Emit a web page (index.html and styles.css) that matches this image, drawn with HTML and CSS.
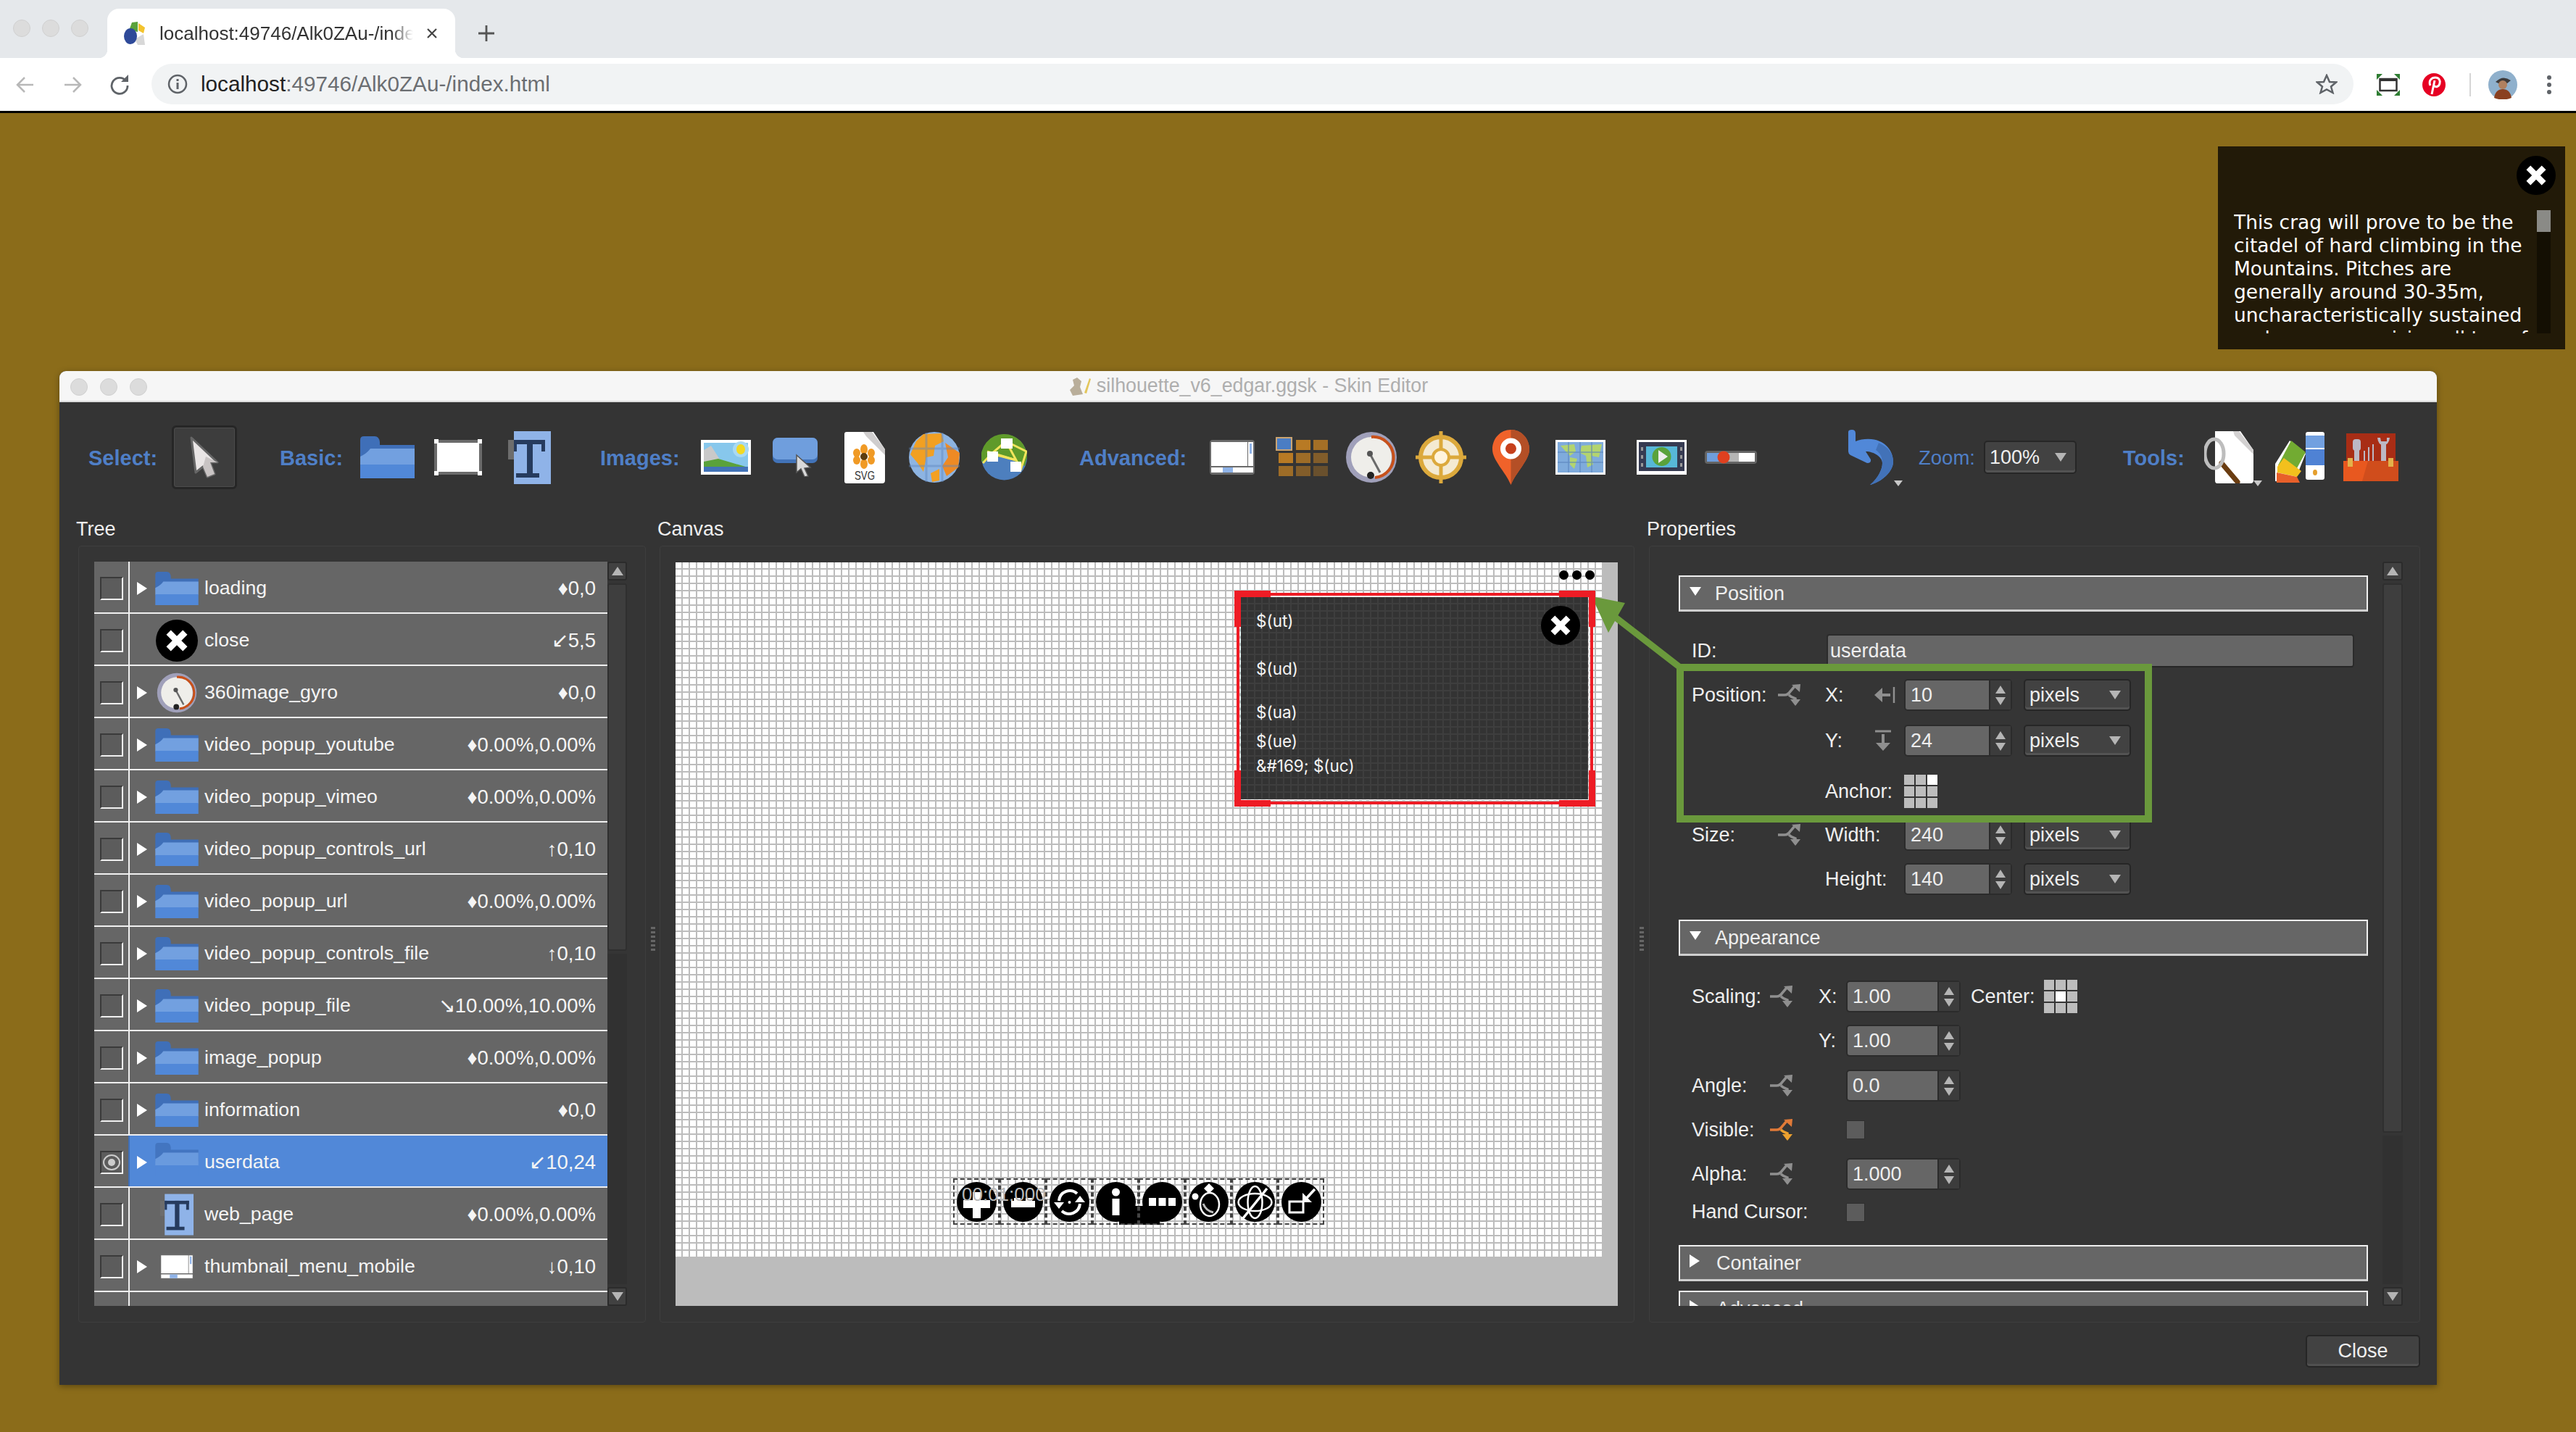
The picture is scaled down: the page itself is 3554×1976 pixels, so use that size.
FILE: index.html
```html
<!DOCTYPE html>
<html lang="en">
<head>
<meta charset="utf-8">
<title>Skin Editor</title>
<link rel="stylesheet" href="styles.css">
</head>
<body>
<svg class="sprite" width="0" height="0" aria-hidden="true">
  <defs>
    <symbol id="folder" viewBox="0 0 75 58"><path d="M0 5Q0 0 5 0H20Q26 0 27 8V12H75V32H0Z" fill="#3f6fb8"/><path d="M0 28Q9 24 14 17H75V40H0Z" fill="#72a0e0"/><path d="M0 39H75V58H0Z" fill="#5188d8"/></symbol>
    <symbol id="close" viewBox="0 0 56 56"><circle cx="28" cy="28" r="28" fill="#000"/><path d="M14 20l6-6 8 8 8-8 6 6-8 8 8 8-6 6-8-8-8 8-6-6 8-8z" fill="#fff"/></symbol>
    <symbol id="rectframe" viewBox="0 0 66 50"><rect x="2" y="3" width="62" height="44" fill="#fff" stroke="#6b6b6b" stroke-width="4"/><g fill="#fff"><rect x="0" y="0" width="6" height="6"/><rect x="60" y="0" width="6" height="6"/><rect x="0" y="44" width="6" height="6"/><rect x="60" y="44" width="6" height="6"/></g></symbol>
    <symbol id="textbox" viewBox="0 0 59 73"><rect x="0" y="12" width="9" height="27" fill="#6d6d6d"/><rect x="8" y="0" width="51" height="73" fill="#8fb3e8"/><g fill="#263b5e"><rect x="8" y="12" width="43" height="6"/><rect x="26" y="12" width="8" height="50"/><rect x="11" y="58" width="32" height="6"/><rect x="46" y="12" width="5" height="16"/><rect x="8" y="12" width="4" height="16"/></g></symbol>
    <symbol id="image" viewBox="0 0 69 48"><rect width="69" height="48" fill="#fff"/><rect x="4" y="4" width="61" height="40" fill="#87c7ec"/><circle cx="55" cy="13" r="11" fill="#a9d9f2"/><ellipse cx="55" cy="13" rx="6" ry="7" fill="#f3d923"/><path d="M4 14L14 8 28 30 4 40z" fill="#c9c9c9"/><path d="M4 30L24 26 65 38V44H4z" fill="#5aa23b"/><rect x="4" y="37" width="61" height="7" fill="#4273b8"/></symbol>
    <symbol id="btnicon" viewBox="0 0 63 54"><rect width="62" height="35" rx="7" fill="#4273b8"/><rect width="62" height="30" rx="7" fill="#6f9edd"/><path d="M33 24L52 41 44 42 49 53 44 54 39 43 33 48z" fill="#d9d9d9" stroke="#555" stroke-width="1.5"/></symbol>
    <symbol id="svgdoc" viewBox="0 0 56 71"><path d="M3 0H40L56 24V67Q56 71 52 71H3Q0 71 0 68V3Q0 0 3 0Z" fill="#fff"/><path d="M38 0L56 24 56 32 30 6 26 0Z" fill="#cfcdcd"/><g fill="#f09a25"><ellipse cx="27" cy="24" rx="5" ry="7"/><ellipse cx="27" cy="44" rx="5" ry="7"/><ellipse cx="17" cy="29" rx="5" ry="6"/><ellipse cx="37" cy="29" rx="5" ry="6"/><ellipse cx="17" cy="39" rx="5" ry="6"/><ellipse cx="37" cy="39" rx="5" ry="6"/></g><circle cx="27" cy="34" r="5" fill="#5a3c10"/><text x="28" y="66" text-anchor="middle" font-family="Liberation Sans" font-size="17" fill="#333" textLength="28" lengthAdjust="spacingAndGlyphs">SVG</text></symbol>
    <symbol id="globe" viewBox="0 0 70 72"><circle cx="35" cy="36" r="35" fill="#8db4e2"/><path d="M20 4L45 3 48 14 36 20 34 34 24 36 20 56 12 44 2 32 10 14z" fill="#f2a022"/><path d="M50 16L70 30 68 50 52 62 46 48 54 36z" fill="#ee8a24"/><path d="M30 58L42 52 42 68 32 70z" fill="#f2a022"/><g stroke="#5e86bf" stroke-width="3" fill="none" opacity=".45"><path d="M0 24H70M0 48H70"/><path d="M24 2V70M46 2V70"/></g></symbol>
    <symbol id="network" viewBox="0 0 63 64"><circle cx="31.500" cy="32" r="31.500" fill="#4d7fbe"/><path d="M31.500 0A31.500 32 0 0 1 63 32L60 44 30 30 0 38A31.500 32 0 0 1 31.500 0Z" fill="#5f9a2a"/><g stroke="#f2e55b" stroke-width="3" fill="none"><path d="M34 10L14 27 2 40"/><path d="M34 10L48 36 8 24"/><path d="M34 10L62 24 54 50"/><path d="M14 27L48 36"/></g><g fill="#fff"><rect x="27" y="6" width="16" height="14"/><rect x="8" y="24" width="15" height="14"/><rect x="40" y="38" width="15" height="14"/></g></symbol>
    <symbol id="thumbs" viewBox="0 0 62 48"><rect width="62" height="48" rx="4" fill="#6a6a6a"/><rect x="2" y="3" width="50" height="33" fill="#fff"/><rect x="53" y="3" width="7" height="33" fill="#fff"/><rect x="55" y="5" width="3" height="14" fill="#8fb3e8"/><rect x="2" y="38" width="58" height="7" fill="#fff"/><rect x="18" y="38" width="14" height="7" fill="#8fb3e8"/></symbol>
    <symbol id="gridicon" viewBox="0 0 72 56"><rect x="1" y="1" width="21" height="17" fill="#4a7dc4" stroke="#caa472" stroke-width="2"/><g fill="#b87a24"><rect x="28" y="4" width="20" height="14"/><rect x="52" y="4" width="20" height="14" opacity=".85"/><rect x="4" y="22" width="20" height="14"/><rect x="28" y="22" width="20" height="14" opacity=".8"/><rect x="52" y="22" width="20" height="14" opacity=".6"/><rect x="4" y="40" width="20" height="14" opacity=".8"/><rect x="28" y="40" width="20" height="14" opacity=".6"/><rect x="52" y="40" width="20" height="14" opacity=".4"/></g></symbol>
    <symbol id="gauge" viewBox="0 0 70 72"><circle cx="35" cy="36" r="35" fill="#a0a0ba"/><circle cx="35" cy="36" r="28" fill="#efeeea"/><path d="M35 8A28 28 0 0 1 40 64" fill="none" stroke="#c8511b" stroke-width="4"/><path d="M34 33L47 57" stroke="#6a6a6a" stroke-width="3"/><circle cx="33" cy="31" r="4" fill="#555"/><circle cx="34" cy="61" r="5" fill="#222"/></symbol>
    <symbol id="target" viewBox="0 0 70 72"><circle cx="35" cy="36" r="28" fill="#f4ead2" stroke="#dca93c" stroke-width="6"/><path d="M35 0V72M0 36H70" stroke="#dca93c" stroke-width="5"/><circle cx="35" cy="36" r="11" fill="#fff4dc" stroke="#dca93c" stroke-width="4"/></symbol>
    <symbol id="pin" viewBox="0 0 51 76"><path d="M25.500 0C11 0 0 12 0 27C0 42 18 58 25.500 76C33 58 51 42 51 27C51 12 40 0 25.500 0Z" fill="#f0622a"/><path d="M25.500 0C40 0 51 12 51 27C51 42 33 58 25.500 76Z" fill="#b44f26"/><circle cx="25.500" cy="26" r="11" fill="#c6401c" stroke="#fff" stroke-width="7"/></symbol>
    <symbol id="mapicon" viewBox="0 0 69 48"><rect width="69" height="48" fill="#fff"/><rect x="3" y="3" width="63" height="42" fill="#7fabdc"/><path d="M7 8L26 6 28 16 20 22 16 18zM20 24L30 26 26 40 20 34zM36 8L64 6 60 24 50 22 52 34 44 38 42 22 34 18z" fill="#b3d46f"/><path d="M3 17H66M3 31H66M18 3V45M34 3V45M50 3V45" stroke="#5a84bc" stroke-width="1.500" opacity=".7"/></symbol>
    <symbol id="video" viewBox="0 0 69 48"><rect width="69" height="48" fill="#fff"/><rect x="3" y="3" width="63" height="40" fill="#363b52"/><rect x="13" y="9" width="43" height="29" fill="#57b7d8"/><circle cx="34.500" cy="23" r="13" fill="#5aa23b"/><path d="M30 14L43 23 30 32z" fill="#eee"/><g fill="#999"><rect x="6" y="10" width="3" height="5"/><rect x="6" y="21" width="3" height="5"/><rect x="6" y="32" width="3" height="5"/><rect x="60" y="10" width="3" height="5"/><rect x="60" y="21" width="3" height="5"/><rect x="60" y="32" width="3" height="5"/></g></symbol>
    <symbol id="slider" viewBox="0 0 72 18"><rect width="72" height="18" rx="4" fill="#646464"/><rect x="3" y="3" width="20" height="12" fill="#6f9edd"/><rect x="23" y="3" width="24" height="12" fill="#b5b5b5"/><rect x="47" y="3" width="22" height="12" fill="#fff"/><circle cx="26" cy="9" r="8.500" fill="#e0401f"/></symbol>
    <symbol id="undo" viewBox="0 0 64 76"><path d="M2 3Q2 0 7 0Q12 0 12 5V16Q22 12 34 13C54 15 64 30 64 44C64 58 48 72 32 76C44 66 49 54 49 46C49 38 38 30 26 30L33 41Q34 46 28 46L5 35Q2 33 2 30Z" fill="#5188d8"/><path d="M44 18C58 24 64 34 64 44C64 58 48 72 32 76C44 66 49 54 49 46C49 38 46 32 40 28Z" fill="#4272b8"/></symbol>
    <symbol id="docfind" viewBox="0 0 68 72"><path d="M15 0H50L68 26V68Q68 72 64 72H18Q15 72 15 68Z" fill="#fff"/><path d="M48 0L68 26V32L42 6 40 0Z" fill="#d3d1d1"/><path d="M24 44L46 70" stroke="#6a3d12" stroke-width="7" stroke-linecap="round"/><ellipse cx="14" cy="31" rx="13" ry="20" fill="none" stroke="#bdbdbd" stroke-width="5"/></symbol>
    <symbol id="paint" viewBox="0 0 68 70"><path d="M0 68V44L20 12 42 30 26 70z" fill="#fff"/><path d="M4 46L22 12 42 28 30 50z" fill="#72ab32"/><path d="M3 48L12 36 36 54 30 62 3 56z" fill="#f3c01d"/><path d="M2 56L30 62 34 70H2z" fill="#e8602a"/><rect x="42" y="0" width="26" height="66" rx="3" fill="#fff"/><rect x="42" y="5" width="26" height="17" fill="#72a0e0"/><rect x="42" y="24" width="26" height="22" fill="#4f82d4"/><ellipse cx="55" cy="56" rx="3" ry="4" fill="#e59f2d"/></symbol>
    <symbol id="toolbox" viewBox="0 0 76 66"><rect x="4" y="0" width="68" height="38" fill="#a82d15"/><rect x="0" y="38" width="76" height="28" fill="#e8581f"/><path d="M34 38H76V66H26z" fill="#d04d1c"/><g fill="#bcb8c4"><rect x="15" y="12" width="7" height="26"/><rect x="13" y="8" width="11" height="16" rx="4"/><path d="M52 12h7v26h-7z"/><path d="M47 6Q48 16 55 16Q63 16 64 6L60 6 60 11 52 11 51 6Z"/><rect x="28" y="24" width="2" height="14"/><rect x="34" y="19" width="2" height="19"/><rect x="40" y="15" width="2" height="23"/></g><rect x="6" y="34" width="7" height="12" fill="#e3b14a"/><rect x="62" y="34" width="7" height="12" fill="#e3b14a"/></symbol>
    <symbol id="cursor" viewBox="0 0 40 58"><path d="M2 2L38 36 28 36 34 52 24 56 18 42 8 50z" fill="#e9e5e5" stroke="#666" stroke-width="3" stroke-linejoin="round"/><path d="M38 36L28 36 34 52 24 56 18 42 22 28z" fill="#c9c4c4"/></symbol>
    <symbol id="link" viewBox="0 0 32 30"><g fill="none" stroke="currentColor" stroke-width="3.500"><path d="M0 15H9Q14 15 17 10L23 3"/><path d="M15 15Q18 18 24 20V28"/></g><path d="M19 1L31 0 30 11z" fill="currentColor"/><path d="M17 21H31L24 30z" fill="currentColor"/></symbol>
    <symbol id="linkwarm" viewBox="0 0 32 30"><g fill="none" stroke-width="3.500"><path d="M0 15H9Q14 15 17 10L23 3" stroke="#e07a38"/><path d="M15 15Q18 18 24 20V28" stroke="#eba12f"/></g><path d="M19 1L31 0 30 11z" fill="#e07a38"/><path d="M17 21H31L24 30z" fill="#eba12f"/></symbol>
    <symbol id="back" viewBox="0 0 28 28"><path d="M25 14H4M13 4L3 14 13 24" fill="none" stroke="currentColor" stroke-width="2.500"/></symbol>
    <symbol id="fwd" viewBox="0 0 28 28"><path d="M3 14H24M15 4L25 14 15 24" fill="none" stroke="currentColor" stroke-width="2.500"/></symbol>
  </defs>
</svg>

<header class="chrome">
  <div class="tabstrip">
    <div class="lights lights-chrome"><i></i><i></i><i></i></div>
    <div class="tab">
      <svg class="favicon" width="35" height="32" viewBox="0 0 35 32"><path d="M8 12L12 1 20 0 20 14z" fill="#5aa23b"/><path d="M21 2L30 8 28 16 21 12z" fill="#f3c32d"/><path d="M16 24L28 17 30 32 20 32z" fill="#d8d8d8"/><ellipse cx="10" cy="20" rx="9" ry="11" fill="#2e4a99"/></svg>
      <span class="tab-title">localhost:49746/Alk0ZAu-/index.html</span>
      <svg class="tab-x" width="16" height="16" viewBox="0 0 16 16"><path d="M2 2L14 14M14 2L2 14" stroke="#444" stroke-width="2.200"/></svg>
    </div>
    <svg class="newtab" width="24" height="24" viewBox="0 0 24 24"><path d="M12 1V23M1 12H23" stroke="#555" stroke-width="2.800"/></svg>
  </div>
  <div class="navbar">
    <svg class="nav-ico nav-off" width="28" height="28"><use href="#back"/></svg>
    <svg class="nav-ico nav-off" width="28" height="28"><use href="#fwd"/></svg>
    <svg class="nav-ico nav-on" width="28" height="28" viewBox="0 0 28 28"><path d="M23 9A11 11 0 1 0 25 15" fill="none" stroke="currentColor" stroke-width="2.800"/><path d="M16 10H26V0z" fill="currentColor"/></svg>
    <div class="omnibox">
      <svg class="info" width="28" height="28" viewBox="0 0 28 28"><circle cx="14" cy="14" r="12" fill="none" stroke="#5f6368" stroke-width="2.500"/><rect x="12.500" y="12" width="3" height="9" fill="#5f6368"/><rect x="12.500" y="7" width="3" height="3" fill="#5f6368"/></svg>
      <span class="url"><b>localhost</b>:49746/Alk0ZAu-/index.html</span>
      <svg class="star" width="30" height="28" viewBox="0 0 30 28"><path d="M15 2L19 11 28 11.500 21 17.500 23.500 26 15 21.500 6.500 26 9 17.500 2 11.500 11 11z" fill="none" stroke="#5f6368" stroke-width="2.500"/></svg>
    </div>
    <div class="nav-actions">
      <svg width="32" height="30" viewBox="0 0 32 30"><path d="M0 0H8L0 8zM32 0H24L32 8zM0 30H8L0 22zM32 30H24L32 22z" fill="#2e7d32"/><rect x="4.500" y="7" width="23" height="16" fill="none" stroke="#333" stroke-width="2.500"/><rect x="4" y="6" width="24" height="4" fill="#333"/></svg>
      <svg width="32" height="32" viewBox="0 0 32 32"><circle cx="16" cy="16" r="16" fill="#e60023"/><path d="M11 17C8 10 13 6 18 6C23 6 25 10 24 14C23 19 18 20 16 17M17 10L13 29" fill="none" stroke="#fff" stroke-width="3"/></svg>
      <span class="nav-sep"></span>
      <svg width="40" height="40" viewBox="0 0 40 40"><circle cx="20" cy="20" r="20" fill="#8fb0cc"/><path d="M10 16Q20 6 31 14L26 18H14z" fill="#3d3a3a"/><ellipse cx="20" cy="20" rx="6" ry="6" fill="#b0805f"/><path d="M8 38Q10 26 20 26Q30 26 32 38Q20 43 8 38Z" fill="#8a4020"/></svg>
      <svg width="8" height="28" viewBox="0 0 8 28"><circle cx="4" cy="4" r="3" fill="#5f6368"/><circle cx="4" cy="14" r="3" fill="#5f6368"/><circle cx="4" cy="24" r="3" fill="#5f6368"/></svg>
    </div>
  </div>
</header>

<main class="desktop">
  <aside class="popup">
    <svg class="popup-close" width="54" height="54"><use href="#close"/></svg>
    <div class="popup-text">This crag will prove to be the citadel of hard climbing in the Mountains. Pitches are generally around 30-35m, uncharacteristically sustained and uncompromising all top of</div>
    <div class="popup-track"><div class="popup-thumb"></div></div>
  </aside>

  <section class="window">
    <div class="titlebar">
      <div class="lights lights-win"><i></i><i></i><i></i></div>
      <svg width="31" height="26" viewBox="0 0 31 26"><path d="M6 4L12 1 18 6 16 14 20 24 6 26 2 18 8 12z" fill="#b9ae9a"/><path d="M22 22L29 2 31 3 25 23z" fill="#e3c65b"/></svg>
      <span>silhouette_v6_edgar.ggsk - Skin Editor</span>
    </div>

    <div class="toolbar">
      <div class="tgroup">
        <span class="tlabel w-select">Select:</span>
        <span class="selectbtn"><svg width="40" height="58"><use href="#cursor"/></svg></span>
      </div>
      <div class="tgroup">
        <span class="tlabel w-basic">Basic:</span>
        <span class="tool wide"><svg width="75" height="58"><use href="#folder"/></svg></span>
        <span class="tool wide"><svg width="66" height="50"><use href="#rectframe"/></svg></span>
        <span class="tool wide"><svg width="59" height="73"><use href="#textbox"/></svg></span>
      </div>
      <div class="tgroup">
        <span class="tlabel w-images">Images:</span>
        <span class="tool"><svg width="69" height="48"><use href="#image"/></svg></span>
        <span class="tool"><svg width="63" height="54"><use href="#btnicon"/></svg></span>
        <span class="tool"><svg width="56" height="71"><use href="#svgdoc"/></svg></span>
        <span class="tool"><svg width="70" height="72"><use href="#globe"/></svg></span>
        <span class="tool"><svg width="63" height="64"><use href="#network"/></svg></span>
      </div>
      <div class="tgroup">
        <span class="tlabel w-advanced">Advanced:</span>
        <span class="tool"><svg width="62" height="48"><use href="#thumbs"/></svg></span>
        <span class="tool"><svg width="72" height="56"><use href="#gridicon"/></svg></span>
        <span class="tool"><svg width="70" height="72"><use href="#gauge"/></svg></span>
        <span class="tool"><svg width="70" height="72"><use href="#target"/></svg></span>
        <span class="tool"><svg width="51" height="76"><use href="#pin"/></svg></span>
        <span class="tool"><svg width="69" height="48"><use href="#mapicon"/></svg></span>
        <span class="tool tool-sep"><svg width="69" height="48"><use href="#video"/></svg></span>
        <span class="tool"><svg width="72" height="18"><use href="#slider"/></svg></span>
      </div>
      <div class="tgroup">
        <span class="tool tool-menu"><svg width="64" height="76"><use href="#undo"/></svg></span>
        <span class="zoomlabel">Zoom:</span>
        <span class="combo combo-zoom">100%<i class="tri-down"></i></span>
      </div>
      <div class="tgroup">
        <span class="tlabel w-tools">Tools:</span>
        <span class="tool wide tool-menu"><svg width="68" height="72"><use href="#docfind"/></svg></span>
        <span class="tool wide"><svg width="68" height="70"><use href="#paint"/></svg></span>
        <span class="tool wide"><svg width="76" height="66"><use href="#toolbox"/></svg></span>
      </div>
    </div>

    <div class="panels">
      <div class="panel">
        <h2 class="panel-title">Tree</h2>
        <div class="groupbox box-tree">
          <div class="treelist">
            <div class="row"><span class="chk"><i></i></span><i class="tri-right"></i><span class="ico"><svg width="60" height="46"><use href="#folder"/></svg></span><span class="name">loading</span><span class="val">♦0,0</span></div>
            <div class="row"><span class="chk"><i></i></span><span class="noarrow"></span><span class="ico"><svg width="58" height="58"><use href="#close"/></svg></span><span class="name">close</span><span class="val">↙5,5</span></div>
            <div class="row"><span class="chk"><i></i></span><i class="tri-right"></i><span class="ico"><svg width="56" height="56"><use href="#gauge"/></svg></span><span class="name">360image_gyro</span><span class="val">♦0,0</span></div>
            <div class="row"><span class="chk"><i></i></span><i class="tri-right"></i><span class="ico"><svg width="60" height="46"><use href="#folder"/></svg></span><span class="name">video_popup_youtube</span><span class="val">♦0.00%,0.00%</span></div>
            <div class="row"><span class="chk"><i></i></span><i class="tri-right"></i><span class="ico"><svg width="60" height="46"><use href="#folder"/></svg></span><span class="name">video_popup_vimeo</span><span class="val">♦0.00%,0.00%</span></div>
            <div class="row"><span class="chk"><i></i></span><i class="tri-right"></i><span class="ico"><svg width="60" height="46"><use href="#folder"/></svg></span><span class="name">video_popup_controls_url</span><span class="val">↑0,10</span></div>
            <div class="row"><span class="chk"><i></i></span><i class="tri-right"></i><span class="ico"><svg width="60" height="46"><use href="#folder"/></svg></span><span class="name">video_popup_url</span><span class="val">♦0.00%,0.00%</span></div>
            <div class="row"><span class="chk"><i></i></span><i class="tri-right"></i><span class="ico"><svg width="60" height="46"><use href="#folder"/></svg></span><span class="name">video_popup_controls_file</span><span class="val">↑0,10</span></div>
            <div class="row"><span class="chk"><i></i></span><i class="tri-right"></i><span class="ico"><svg width="60" height="46"><use href="#folder"/></svg></span><span class="name">video_popup_file</span><span class="val">↘10.00%,10.00%</span></div>
            <div class="row"><span class="chk"><i></i></span><i class="tri-right"></i><span class="ico"><svg width="60" height="46"><use href="#folder"/></svg></span><span class="name">image_popup</span><span class="val">♦0.00%,0.00%</span></div>
            <div class="row"><span class="chk"><i></i></span><i class="tri-right"></i><span class="ico"><svg width="60" height="46"><use href="#folder"/></svg></span><span class="name">information</span><span class="val">♦0,0</span></div>
            <div class="row row-sel"><span class="chk"><i class="eye"><svg width="26" height="26" viewBox="0 0 26 26"><ellipse cx="13" cy="13" rx="11" ry="10" fill="none" stroke="#ccc" stroke-width="2"/><circle cx="13" cy="13" r="5" fill="#ccc"/></svg></i></span><i class="tri-right"></i><span class="ico"><svg width="60" height="46"><use href="#folder"/></svg></span><span class="name">userdata</span><span class="val">↙10,24</span></div>
            <div class="row"><span class="chk"><i></i></span><span class="noarrow"></span><span class="ico ico-t"><svg width="46" height="58"><use href="#textbox"/></svg></span><span class="name">web_page</span><span class="val">♦0.00%,0.00%</span></div>
            <div class="row"><span class="chk"><i></i></span><i class="tri-right"></i><span class="ico"><svg width="48" height="36"><use href="#thumbs"/></svg></span><span class="name">thumbnail_menu_mobile</span><span class="val">↓0,10</span></div>
            <div class="row"><span class="chk"><i></i></span></div>
          </div>
          <div class="scrollbar">
            <span class="sb-btn"><i class="tri-up"></i></span>
            <span class="sb-thumb sb-thumb-tree"></span>
            <span class="sb-rest"></span>
            <span class="sb-btn"><i class="tri-down"></i></span>
          </div>
        </div>
      </div>

      <div class="splitter"><i></i></div>

      <div class="panel">
        <h2 class="panel-title">Canvas</h2>
        <div class="groupbox box-canvas">
          <div class="viewport">
            <div class="stage">
              <div class="dots"><i></i><i></i><i></i></div>
              <div class="selection">
                <i class="corner c-tl"></i><i class="corner c-tr"></i><i class="corner c-bl"></i><i class="corner c-br"></i>
                <div class="node">
                  <span class="nt nt-1">$(ut)</span>
                  <span class="nt nt-2">$(ud)</span>
                  <span class="nt nt-3">$(ua)</span>
                  <span class="nt nt-4">$(ue)</span>
                  <span class="nt nt-5">&amp;#169; $(uc)</span>
                  <svg class="node-close" width="54" height="54"><use href="#close"/></svg>
                </div>
              </div>
              <div class="ctrlbar">
                <span class="ctrl"><svg width="55" height="55" viewBox="0 0 55 55"><circle cx="27.500" cy="27.500" r="27.500"/><path d="M22 14H33V25H46V36H33V50H22V36H9V25H22z" fill="#fff"/></svg></span>
                <span class="ctrl"><svg width="55" height="55" viewBox="0 0 55 55"><circle cx="27.500" cy="27.500" r="27.500"/><path d="M11 35V26H15V22H24V26H31V22H40V26H44V35z" fill="#fff"/></svg></span>
                <span class="ctrl"><svg width="55" height="55" viewBox="0 0 55 55"><circle cx="27.500" cy="27.500" r="27.500"/><g fill="none" stroke="#fff" stroke-width="4"><path d="M13 26A15 15 0 0 1 38 16"/><path d="M42 30A15 15 0 0 1 17 40"/></g><path d="M6 28H20L13 37zM35 28H49L42 19z" fill="#fff"/><circle cx="27.500" cy="28" r="2" fill="#fff"/></svg></span>
                <span class="ctrl"><svg width="55" height="55" viewBox="0 0 55 55"><circle cx="27.500" cy="27.500" r="27.500"/><circle cx="27.500" cy="14" r="5.500" fill="#fff"/><rect x="22.500" y="23" width="10" height="23" fill="#fff"/></svg></span>
                <span class="ctrl"><svg width="55" height="55" viewBox="0 0 55 55"><circle cx="27.500" cy="27.500" r="27.500"/><rect x="9" y="22" width="10" height="11" fill="#fff"/><rect x="22.500" y="22" width="10" height="11" fill="#fff"/><rect x="36" y="22" width="10" height="11" fill="#fff"/></svg></span>
                <span class="ctrl"><svg width="55" height="55" viewBox="0 0 55 55"><circle cx="27.500" cy="27.500" r="27.500"/><ellipse cx="29" cy="31" rx="13" ry="16" fill="none" stroke="#fff" stroke-width="2.500"/><path d="M20 30Q24 40 34 42" fill="none" stroke="#bbb" stroke-width="3"/><path d="M28 2L35 9 28 16 21 9z" fill="#fff"/><circle cx="9" cy="20" r="4.500" fill="#fff"/></svg></span>
                <span class="ctrl"><svg width="55" height="55" viewBox="0 0 55 55"><circle cx="27.500" cy="27.500" r="27.500"/><g fill="none" stroke="#fff" stroke-width="2.500"><ellipse cx="27.500" cy="28" rx="23" ry="12"/><ellipse cx="27.500" cy="28" rx="10" ry="22"/></g><path d="M11 50L44 9" stroke="#fff" stroke-width="3.500"/></svg></span>
                <span class="ctrl"><svg width="55" height="55" viewBox="0 0 55 55"><circle cx="27.500" cy="27.500" r="27.500"/><rect x="11" y="27" width="19" height="15" fill="none" stroke="#fff" stroke-width="3"/><path d="M46 10L33 24" stroke="#fff" stroke-width="3.500"/><path d="M29 15V28H42z" fill="#fff"/></svg></span>
                <span class="ctrl-tab"></span>
                <span class="ctrl-time">00:01:000</span>
              </div>
            </div>
          </div>
        </div>
      </div>

      <div class="splitter"><i></i></div>

      <div class="panel">
        <h2 class="panel-title">Properties</h2>
        <div class="groupbox box-props">
          <div class="props">
            <div class="sect-head"><i class="tri-down"></i>Position</div>
            <div class="form form-position">
              <div class="f-id"><span class="flabel">ID:</span><span class="idfield">userdata</span></div>
              <div class="f-row"><span class="flabel">Position:</span><svg class="lnk" width="32" height="30"><use href="#link"/></svg><span class="axis"><span>X:</span><svg class="lnk" width="30" height="26" viewBox="0 0 30 26"><path d="M28 2V24" stroke="currentColor" stroke-width="2.500"/><path d="M23 13H8" stroke="currentColor" stroke-width="4"/><path d="M12 3L1 13 12 23z" fill="currentColor"/></svg></span><span class="spin">10<span class="spin-btns"><i class="tri-up"></i><i class="tri-down"></i></span></span><span class="combo">pixels<i class="tri-down"></i></span></div>
              <div class="f-row f-second"><span class="flabel"></span><span></span><span class="axis"><span>Y:</span><svg class="lnk" width="30" height="30" viewBox="0 0 30 30"><path d="M4 2H26" stroke="currentColor" stroke-width="3"/><path d="M15 6V22" stroke="currentColor" stroke-width="4"/><path d="M5 18L15 29 25 18z" fill="currentColor"/></svg></span><span class="spin">24<span class="spin-btns"><i class="tri-up"></i><i class="tri-down"></i></span></span><span class="combo">pixels<i class="tri-down"></i></span></div>
              <div class="f-row f-anchor"><span class="flabel"></span><span></span><span class="axis">Anchor:</span><span class="anchor"><i></i><i></i><i class="on"></i><i></i><i></i><i></i><i></i><i></i><i></i></span></div>
              <div class="f-row"><span class="flabel">Size:</span><svg class="lnk" width="32" height="30"><use href="#link"/></svg><span class="axis">Width:</span><span class="spin">240<span class="spin-btns"><i class="tri-up"></i><i class="tri-down"></i></span></span><span class="combo">pixels<i class="tri-down"></i></span></div>
              <div class="f-row"><span class="flabel"></span><span></span><span class="axis">Height:</span><span class="spin">140<span class="spin-btns"><i class="tri-up"></i><i class="tri-down"></i></span></span><span class="combo">pixels<i class="tri-down"></i></span></div>
            </div>
            <div class="sect-head"><i class="tri-down"></i>Appearance</div>
            <div class="form form-appear">
              <div class="a-row"><span>Scaling:</span><svg class="lnk" width="32" height="30"><use href="#link"/></svg><span>X:</span><span class="spin">1.00<span class="spin-btns"><i class="tri-up"></i><i class="tri-down"></i></span></span><span class="center-lbl">Center:</span><span class="anchor"><i></i><i></i><i></i><i></i><i class="on"></i><i></i><i></i><i></i><i></i></span></div>
              <div class="a-row"><span></span><span></span><span>Y:</span><span class="spin">1.00<span class="spin-btns"><i class="tri-up"></i><i class="tri-down"></i></span></span></div>
              <div class="a-row"><span>Angle:</span><svg class="lnk" width="32" height="30"><use href="#link"/></svg><span></span><span class="spin">0.0<span class="spin-btns"><i class="tri-up"></i><i class="tri-down"></i></span></span></div>
              <div class="a-row a-visible"><span>Visible:</span><svg width="32" height="30"><use href="#linkwarm"/></svg><span></span><span class="pcheck"></span></div>
              <div class="a-row"><span>Alpha:</span><svg class="lnk" width="32" height="30"><use href="#link"/></svg><span></span><span class="spin">1.000<span class="spin-btns"><i class="tri-up"></i><i class="tri-down"></i></span></span></div>
              <div class="a-row a-hand"><span class="hand">Hand Cursor:</span><span class="pcheck"></span></div>
            </div>
            <div class="sect-head sect-closed"><i class="tri-right"></i>Container</div>
            <div class="sect-head sect-closed sect-next"><i class="tri-right"></i>Advanced</div>
          </div>
          <div class="scrollbar sb-props">
            <span class="sb-btn"><i class="tri-up"></i></span>
            <span class="sb-thumb sb-thumb-props"></span>
            <span class="sb-rest"></span>
            <span class="sb-btn"><i class="tri-down"></i></span>
          </div>
        </div>
      </div>
    </div>

    <div class="footer"><span class="btn-close">Close</span></div>
  </section>
</main>

<svg class="annotation" width="3554" height="1976" viewBox="0 0 3554 1976" aria-hidden="true">
  <g fill="none" stroke="#6a993c">
    <rect x="2318" y="921" width="646" height="209" stroke-width="10"/>
    <path d="M2216 842L2318 921" stroke-width="9"/>
  </g>
  <path d="M2196 823L2242 832 2219 873z" fill="#6a993c"/>
</svg>
</body>
</html>
```

FILE: styles.css
```css
* { box-sizing: border-box; }
html, body { margin: 0; padding: 0; }
body {
  width: 3554px;
  height: 1976px;
  overflow: hidden;
  display: flex;
  flex-direction: column;
  background: #8b6c1a;
  font-family: "Liberation Sans", Arial, sans-serif;
  color: #eee;
}
.sprite { position: absolute; }
i { font-style: normal; display: block; }
svg { display: block; flex: none; }

/* browser chrome */
.chrome { flex: none; height: 156px; background: #fff; border-bottom: 3px solid #000; color: #333; }
.tabstrip { height: 80px; background: #e5e8eb; display: flex; align-items: flex-end; position: relative; }
.lights { display: flex; }
.lights i { width: 24px; height: 24px; border-radius: 50%; background: #dcdcdc; border: 1px solid #d0d0d0; }
.lights-chrome { gap: 16px; margin-left: 18px; align-self: center; width: 130px; margin-top: -2px; }
.tab {
  position: relative; width: 480px; height: 68px; background: #fff;
  border-radius: 16px 16px 0 0; display: flex; align-items: center; padding: 0 24px 0 22px;
}
.tab::before, .tab::after { content: ""; position: absolute; bottom: 0; width: 12px; height: 12px; }
.tab::before { left: -12px; background: radial-gradient(circle at 0 0, transparent 12px, #fff 12.500px); }
.tab::after { right: -12px; background: radial-gradient(circle at 100% 0, transparent 12px, #fff 12.500px); }
.tab-title {
  margin-left: 15px; width: 350px; overflow: hidden; white-space: nowrap; font-size: 26px; color: #333;
  -webkit-mask-image: linear-gradient(to right, #000 320px, transparent 350px);
  mask-image: linear-gradient(to right, #000 320px, transparent 350px);
}
.tab-x { margin-left: 18px; }
.newtab { align-self: center; margin-left: 31px; margin-top: 12px; }
.navbar { height: 73px; display: flex; align-items: center; padding-left: 21px; }
.nav-ico { margin-right: 37px; }
.nav-off { color: #b8b8b8; }
.nav-on { color: #5f6368; margin-right: 30px; }
.omnibox {
  width: 3038px; height: 56px; margin-top: -1px; border-radius: 28px; background: #f1f3f4;
  display: flex; align-items: center; padding: 0 22px;
}
.url { margin-left: 18px; font-size: 29.700px; color: #6b6e72; flex: 1; }
.url b { font-weight: 400; color: #222; }
.nav-actions { display: flex; align-items: center; margin-left: 32px; }
.nav-actions svg:nth-child(2) { margin-left: 31px; }
.nav-sep { width: 2px; height: 32px; background: #d5d5d5; margin-left: 33px; }
.nav-actions svg:nth-child(4) { margin-left: 24px; }
.nav-actions svg:nth-child(5) { margin-left: 40px; }

/* desktop */
.desktop { flex: 1; position: relative; }
.popup { position: absolute; left: 3060px; top: 46px; width: 479px; height: 280px; background: #221a08; }
.popup-close { position: absolute; left: 412px; top: 13px; }
.popup-text {
  position: absolute; left: 22px; top: 89px; width: 415px; height: 169px; overflow: hidden;
  font-family: "DejaVu Sans", sans-serif; font-size: 26.500px; line-height: 32px; color: #fff;
}
.popup-track { position: absolute; left: 440px; top: 88px; width: 19px; height: 170px; background: #140f03; }
.popup-thumb { height: 30px; background: #8a8a86; }

.window {
  position: absolute; left: 82px; top: 356px; width: 3280px; height: 1399px;
  background: #343434; border-radius: 9px 9px 0 0; display: flex; flex-direction: column;
  box-shadow: 0 2px 8px rgba(0,0,0,.35);
}
.titlebar {
  flex: none; height: 43px; background: #f6f6f6; border-radius: 9px 9px 0 0; border-bottom: 2px solid #dcdcdc;
  display: flex; align-items: center; justify-content: center; gap: 8px; position: relative;
  color: #aeaeae; font-size: 26.800px;
}
.lights-win { position: absolute; left: 15px; top: 10px; gap: 17px; }

/* toolbar */
.toolbar {
  flex: none; height: 152px; padding-left: 40px;
  display: grid; grid-template-columns: 264px 442px 661px 1043px 397px 1fr; align-items: center;
}
.tgroup { display: flex; align-items: center; }
.tlabel { font-weight: 700; font-size: 29px; color: #4f7fc7; padding-top: 2px; }
.w-select { width: 115px; }
.w-basic { width: 99px; }
.w-images { width: 125px; }
.w-advanced { width: 163px; }
.w-tools { width: 97px; }
.selectbtn {
  width: 90px; height: 88px; border: 3px solid #262626; border-radius: 6px; background: #3d3d3d;
  box-shadow: inset 0 0 0 1px #4c4c4c; display: flex; align-items: center; justify-content: center;
}
.tool { width: 96px; height: 80px; display: flex; align-items: center; justify-content: center; position: relative; }
.wide { width: 98px; }
.tool-sep { margin-left: 16px; }
.tool-menu::after {
  content: ""; position: absolute; right: 3px; bottom: 0;
  border-left: 6px solid transparent; border-right: 6px solid transparent; border-top: 8px solid #c8c8c8;
}
.zoomlabel { width: 90px; margin-left: 19px; font-size: 27.500px; color: #4f7fc7; padding-top: 2px; }
.combo {
  height: 44px; width: 148px; border: 2px solid #262626; border-bottom-color: #262626; border-radius: 5px;
  background: #424242; box-shadow: inset 0 -3px 0 #535353; display: flex; align-items: center; justify-content: space-between;
  padding: 0 12px 0 6px; font-size: 27px; color: #eee;
}
.combo-zoom { width: 128px; height: 46px; }

/* triangles */
.tri-right { width: 0; height: 0; border-top: 9px solid transparent; border-bottom: 9px solid transparent; border-left: 14px solid #fff; }
.tri-down { width: 0; height: 0; border-left: 8px solid transparent; border-right: 8px solid transparent; border-top: 12px solid #b5b5b5; }
.tri-up { width: 0; height: 0; border-left: 8px solid transparent; border-right: 8px solid transparent; border-bottom: 12px solid #b5b5b5; }

/* panels */
.panels {
  flex: 1; min-height: 0; padding: 0 23px 0 26px;
  display: grid; grid-template-columns: 783px 19px 1345px 20px 1064px;
}
.panel { display: flex; flex-direction: column; min-height: 0; }
.panel-title { margin: 0 0 0 -3px; height: 46px; flex: none; font-size: 27px; font-weight: 400; color: #eee; line-height: 46px; }
.groupbox { flex: 1; min-height: 0; border: 1px solid #3e3e3e; border-radius: 4px; display: flex; background: #353535; }
.box-tree { padding: 21px 25px 22px 21px; }
.box-canvas { padding: 22px 22px 22px 21px; }
.box-props { padding: 21px 23px 22px 21px; }
.splitter { display: flex; align-items: center; justify-content: center; padding-top: 60px; }
.splitter i { width: 6px; height: 34px; background: repeating-linear-gradient(to bottom, #666 0 3px, transparent 3px 6px); }

/* tree */
.treelist { flex: 1; overflow: hidden; background: #666; }
.row {
  height: 72px; display: flex; align-items: center; background: #666;
  border-bottom: 2px solid #f0f0f0; padding: 3px 16px 0 0; font-size: 26.700px; color: #f4f4f4;
}
.chk { width: 49px; align-self: stretch; margin-top: -3px; padding: 3px 0 0 8px; flex: none; border-right: 2px solid #f0f0f0; display: flex; align-items: center; }
.chk i { width: 32px; height: 32px; background: #5c5c5c; border-style: solid; border-width: 2px; border-color: #3a3a3a #f0f0f0 #f0f0f0 #3a3a3a; display: flex; align-items: center; justify-content: center; }
.row .tri-right { margin: 0 11px 0 10px; flex: none; }
.noarrow { width: 35px; flex: none; }
.ico { width: 60px; flex: none; display: flex; align-items: center; justify-content: center; }
.name { margin-left: 8px; flex: 1; white-space: nowrap; }
.val { white-space: nowrap; font-size: 27.500px; }
.row-sel { background: #5188d8; }
.row-sel .chk { background: #666; border-right-color: #3f6fb8; }
.row-sel .ico svg { opacity: .75; margin-top: -8px; }

/* scrollbars */
.scrollbar { width: 27px; flex: none; display: flex; flex-direction: column; gap: 4px; margin-left: 0; }
.sb-props { width: 28px; }
.sb-btn { height: 26px; flex: none; background: #414141; border: 2px solid #2b2b2b; border-radius: 3px; display: flex; align-items: center; justify-content: center; }
.sb-thumb { background: #3e3e3e; border: 2px solid #2f2f2f; border-radius: 3px; flex: none; }
.sb-thumb-tree { height: 507px; }
.sb-thumb-props { height: 758px; }
.sb-rest { flex: 1; background: #313131; }

/* canvas */
.viewport { flex: 1; background: #bcbcbc; }
.stage {
  position: relative; width: 1280px; height: 959px;
  background-color: #fff;
  background-image: linear-gradient(to right, transparent 8px, #bcbcbc 8px), linear-gradient(to bottom, transparent 8px, #bcbcbc 8px);
  background-size: 10px 10px;
}
.dots { position: absolute; left: 1219px; top: 11px; display: flex; gap: 5px; }
.dots i { width: 13px; height: 13px; border-radius: 50%; background: #000; }
.selection { position: absolute; left: 771px; top: 39px; width: 498px; height: 298px; }
.selection::before { content: ""; position: absolute; inset: 3px 3px 3px 3px; border: 4px solid #ee1c25; }
.corner { position: absolute; z-index: 1; width: 50px; height: 50px; border: 0 solid #ee1c25; }
.c-tl { left: 0; top: 0; border-width: 9px 0 0 9px; }
.c-tr { right: 0; top: 0; border-width: 9px 9px 0 0; }
.c-bl { left: 0; bottom: 0; border-width: 0 0 9px 9px; }
.c-br { right: 0; bottom: 0; border-width: 0 9px 9px 0; }
.node {
  position: absolute; left: 9px; top: 9px; width: 479px; height: 279px; outline: 2px dashed #eee;
  background-color: #333;
  background-image: linear-gradient(to right, transparent 8px, #3e3e3e 8px), linear-gradient(to bottom, transparent 8px, #3e3e3e 8px);
  background-size: 10px 10px;
}
.nt { position: absolute; left: 21px; font-family: "Inter", sans-serif; font-size: 22.500px; line-height: 24px; color: #f4f4f4; white-space: nowrap; }
.nt-1 { top: 21px; }
.nt-2 { top: 87px; }
.nt-3 { top: 147px; }
.nt-4 { top: 187px; }
.nt-5 { top: 221px; }
.node-close { position: absolute; left: 414px; top: 12px; }
.ctrlbar { position: absolute; left: 383px; top: 850px; display: flex; }
.ctrl { width: 64px; height: 64px; border: 2px dashed #444; display: flex; justify-content: center; padding-top: 3px; position: relative; z-index: 1; }
.ctrl-tab { position: absolute; left: 229px; top: 38px; width: 56px; height: 26px; background: #000; }
.ctrl-time { position: absolute; left: 12px; top: 6px; z-index: 2; font-size: 26px; line-height: 32px; color: #b9b9b9; }

/* properties */
.props { flex: 1; overflow: hidden; padding: 19px 20px 0 19px; min-width: 0; }
.sect-head {
  height: 50px; background: #666; border: 2px solid #f0f0f0; border-bottom-color: #cfcfcf; border-bottom-width: 3px;
  display: flex; align-items: center; padding: 2px 0 0 13px; font-size: 27px; color: #eee;
}
.sect-head i { margin-right: 19px; margin-top: -8px; }
.sect-head .tri-down { border-top-color: #fff; }
.sect-head .tri-right { margin-right: 23px; }
.sect-closed { margin-top: 35px; }
.sect-next { margin-top: 13px; }
.form { padding-left: 18px; font-size: 27px; color: #eee; display: flex; flex-direction: column; }
.form-position { padding-top: 31px; gap: 17px; height: 425px; }
.f-id { display: flex; align-items: center; height: 46px; margin-bottom: -1px; }
.f-id .flabel { width: 186px; }
.idfield { width: 728px; height: 46px; background: #666; border: 2px solid #2b2b2b; border-bottom-color: #262626; border-radius: 4px; padding-left: 3px; line-height: 42px; }
.f-row { display: grid; grid-template-columns: 119px 65px 109px 149px 16px 148px; align-items: center; height: 44px; }
.f-row > .combo { grid-column: 6; }
.f-row > .spin { grid-column: 4; }
.f-second { margin-top: 2px; }
.f-anchor { margin-top: 8px; }
.axis { display: flex; align-items: center; gap: 41px; }
.lnk { color: #8f8f8f; }
.spin {
  height: 44px; width: 100%; background: #666; border: 2px solid #2b2b2b; border-radius: 5px;
  display: flex; align-items: center; justify-content: space-between; padding-left: 7px; font-size: 27px; color: #eee; position: relative;
}
.spin-btns { width: 30px; height: 100%; background: #3c3c3c; border-left: 2px solid #2b2b2b; display: flex; flex-direction: column; align-items: center; justify-content: center; gap: 5px; flex: none; }
.spin-btns i { border-left-width: 7px; border-right-width: 7px; }
.spin-btns .tri-up { border-bottom-width: 11px; }
.spin-btns .tri-down { border-top-width: 11px; }
.anchor { display: grid; grid-template-columns: repeat(3, 14px); grid-auto-rows: 14px; gap: 2px; }
.anchor i { background: #bdbdbd; }
.anchor .on { background: #fff; }
.form-appear { padding-top: 33px; gap: 18px; }
.a-row { display: grid; grid-template-columns: 108px 67px 38px 158px 14px 101px 46px; align-items: center; height: 44px; }
.center-lbl { grid-column: 6; }
.a-row .anchor { grid-column: 7; }
.a-visible { height: 42px; }
.pcheck { width: 26px; height: 26px; background: #5c5c5c; border: 1px solid #2f2f2f; }
.a-hand { height: 26px; margin-top: -3px; grid-template-columns: 213px 26px; }
.hand { white-space: nowrap; }

/* footer */
.footer { flex: none; height: 86px; padding: 17px 23px 0 0; display: flex; justify-content: flex-end; }
.btn-close {
  width: 158px; height: 45px; border: 2px solid #262626; border-radius: 5px; background: #424242;
  box-shadow: inset 0 -3px 0 #505050; text-align: center; line-height: 40px; font-size: 27px; color: #eee;
}

.annotation { position: absolute; left: 0; top: 0; pointer-events: none; }
```
